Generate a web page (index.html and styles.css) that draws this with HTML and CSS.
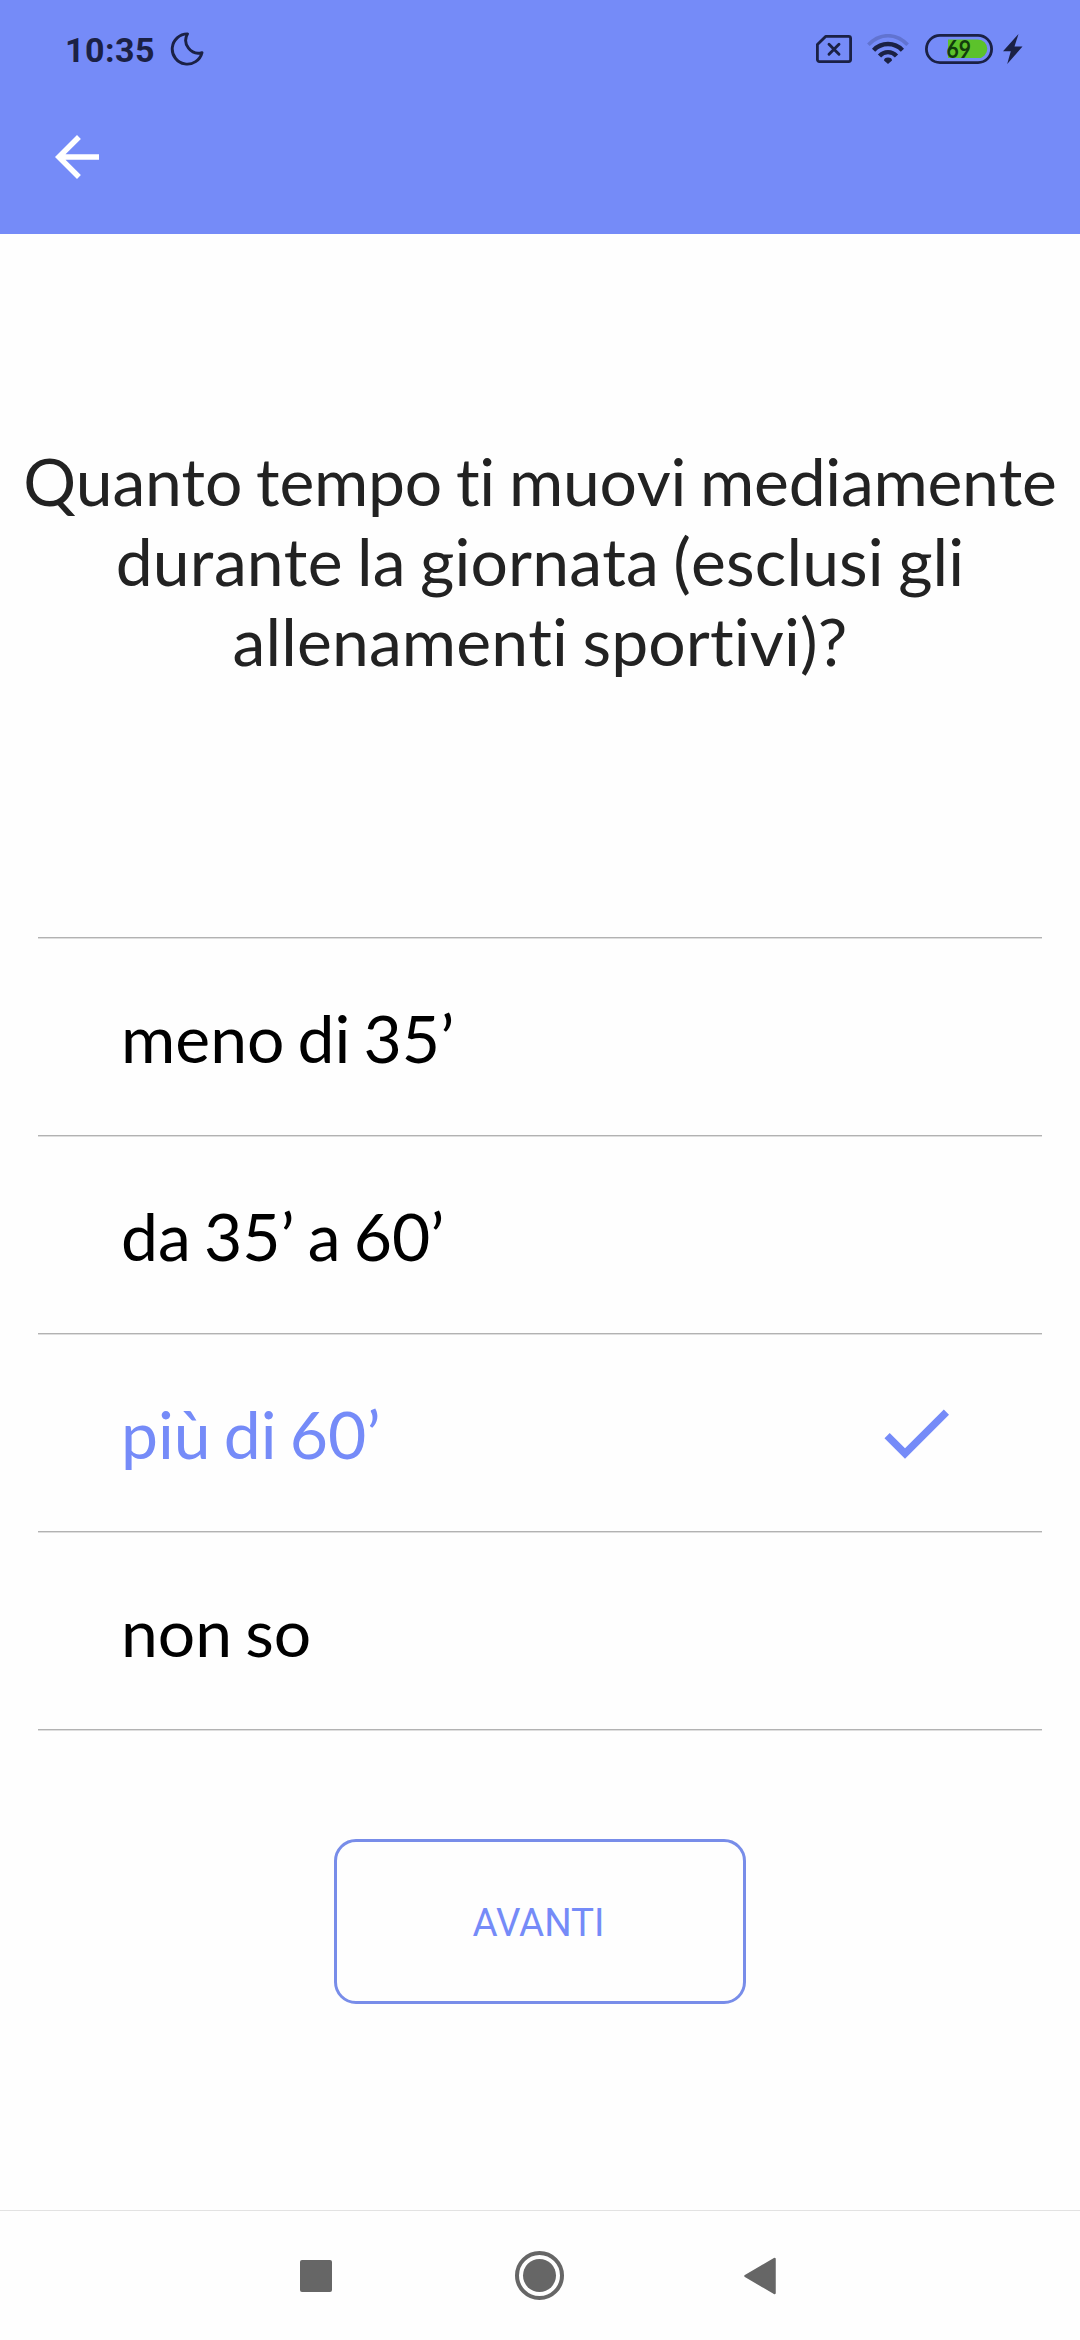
FILE: index.html
```html
<!DOCTYPE html>
<html lang="it">
<head>
<meta charset="utf-8">
<title>Questionario</title>
<link rel="stylesheet" href="styles.css">
</head>
<body>
<div class="screen">
  <header class="header">
    <div class="status">
      <span class="clock">10:35</span>
      <svg class="moon" width="34" height="34" viewBox="0 0 34 34"><path d="M17.500 1.900A15.100 15.100 0 1 0 32 20.600A12.800 12.800 0 0 1 17.500 1.900Z" fill="none" stroke="#1b2145" stroke-width="2.900" stroke-linejoin="round"/></svg>
      <div class="indicators">
        <svg width="36" height="28" viewBox="0 0 36 28" fill="none" stroke="#1b2145"><path d="M9.600 1.400H32.600a2 2 0 0 1 2 2V24.600a2 2 0 0 1-2 2H3.400a2 2 0 0 1-2-2V9.600Z" stroke-width="2.800" stroke-linejoin="round"/><path d="M13 9.200l10 10M23 9.200l-10 10" stroke-width="2.900" stroke-linecap="round"/></svg>
        <svg class="wifi" width="42" height="30" viewBox="0 0 42 30" fill="none" stroke="#1b2145"><path d="M1.400 10.800Q10 1.700 21 1.700T40.600 10.800" stroke-width="3.600" opacity=".22"/><path d="M6.600 16.200Q12.500 10 21 10T35.400 16.200" stroke-width="4.400"/><path d="M12.500 21.900Q16 18.100 21 18.100T29.500 21.900" stroke-width="4.400"/><path d="M21 30l-4-3.600a4 3 0 0 1 8 0Z" fill="#1b2145" stroke="none"/></svg>
        <svg class="battery" width="68" height="30" viewBox="0 0 68 30"><path d="M23 5.500H53a9.300 9.300 0 0 1 0 18.600H23Z" fill="#5cc22b"/><rect x="1.400" y="1.400" width="65.200" height="27.200" rx="13.600" fill="none" stroke="#1b2145" stroke-width="2.800"/><text class="level" x="21.500" y="23.500" textLength="24.500" lengthAdjust="spacingAndGlyphs">69</text></svg>
        <svg width="20" height="30" viewBox="0 0 20 30"><path d="M15.500 0L0 17.200H7.800L4.200 30L19.500 12.600H11.500Z" fill="#1b2145"/></svg>
      </div>
    </div>
    <div class="toolbar">
      <svg width="66" height="66" viewBox="0 0 24 24" fill="#fff"><path d="M20 11H7.830l5.590-5.590L12 4l-8 8 8 8 1.410-1.410L7.830 13H20v-2z"/></svg>
    </div>
  </header>
  <main class="content">
    <h1 class="question">Quanto tempo ti muovi mediamente durante la giornata (esclusi gli allenamenti sportivi)?</h1>
    <ul class="options">
      <li class="option">meno di 35’</li>
      <li class="option">da 35’ a 60’</li>
      <li class="option selected">più di 60’<svg class="check" width="88" height="88" viewBox="0 0 24 24" fill="#758bf8"><path d="M9 16.170L4.830 12l-1.420 1.410L9 19 21 7l-1.410-1.410z"/></svg></li>
      <li class="option">non so</li>
    </ul>
    <button class="next">AVANTI</button>
  </main>
  <nav class="navbar">
    <svg width="32" height="32" viewBox="0 0 32 32"><rect width="32" height="32" rx="2"/></svg>
    <svg class="home" width="49" height="49" viewBox="0 0 49 49"><circle cx="24.500" cy="24.500" r="16.500"/><circle cx="24.500" cy="24.500" r="22.500" fill="none" stroke="#666" stroke-width="4"/></svg>
    <svg width="32" height="38" viewBox="0 0 32 38"><path d="M1.500 19L30.500 2V36Z" stroke="#666" stroke-width="2.500" stroke-linejoin="round"/></svg>
  </nav>
</div>
</body>
</html>
```

FILE: styles.css
```css
* {
  box-sizing: border-box;
}

body {
  margin: 0;
  background: #fefefe;
}

svg {
  display: block;
  flex: none;
}

.screen {
  width: 1080px;
  height: 2340px;
  display: flex;
  flex-direction: column;
  font-family: Lato, sans-serif;
  font-variant-ligatures: none;
}

.header {
  height: 234px;
  background: #758bf8;
}

.status {
  height: 80px;
  padding: 18px 57px 0 65px;
  display: flex;
  align-items: center;
}

.clock {
  width: 105px;
  padding-top: 2px;
  font: 700 34px/40px Roboto, sans-serif;
  letter-spacing: 0.5px;
  color: #1b2145;
}

.indicators {
  margin-left: auto;
  display: flex;
  align-items: center;
}

.wifi {
  margin-left: 15px;
}

.battery {
  margin: 0 10px 0 16px;
}

.level {
  font: 700 24px Lato, sans-serif;
  fill: #123d0c;
}

.toolbar {
  height: 154px;
  padding-left: 44px;
  display: flex;
  align-items: center;
}

.content {
  flex: 1;
  display: flex;
  flex-direction: column;
  align-items: center;
}

.question {
  width: 1060px;
  height: 240px;
  margin: 207px 0 256px;
  font-size: 66px;
  font-weight: 400;
  font-kerning: none;
  line-height: 80px;
  letter-spacing: 0.15px;
  word-spacing: -2.7px;
  text-align: center;
  color: #222;
}

.question::first-line {
  letter-spacing: -0.25px;
}

.options {
  width: 1004px;
  margin: 0;
  padding: 0 0 2px;
  list-style: none;
  background: linear-gradient(#b2b2b2 50%, #dedede 50%) bottom / 100% 2px no-repeat;
}

.option {
  height: 198px;
  padding: 4px 82px 0 83px;
  display: flex;
  align-items: center;
  justify-content: space-between;
  font-size: 66px;
  font-kerning: none;
  line-height: 80px;
  word-spacing: -3.7px;
  color: #000;
  background: linear-gradient(#b2b2b2 50%, #dedede 50%) top / 100% 2px no-repeat;
}

.selected {
  color: #758bf8;
}

.check {
  margin-bottom: 2px;
}

.next {
  width: 412px;
  height: 165px;
  margin-top: 108px;
  padding: 2px 3px 0 0;
  border: 3px solid #788de9;
  border-radius: 22px;
  background: none;
  font: 400 38.5px Roboto, sans-serif;
  color: #758bf8;
}

.navbar {
  height: 130px;
  padding: 0 304px 0 300px;
  border-top: 1px solid #e2e2e2;
  display: flex;
  align-items: center;
  justify-content: space-between;
  fill: #666;
}

.home {
  margin-left: 3px;
}
```
